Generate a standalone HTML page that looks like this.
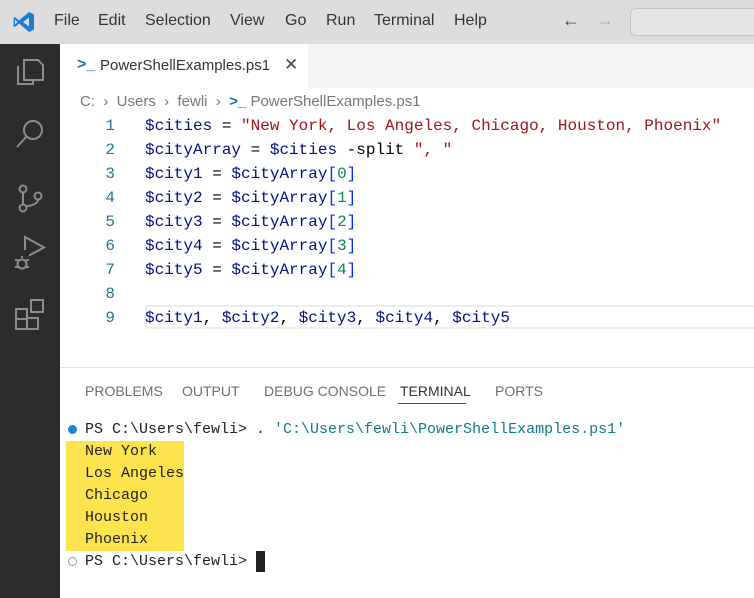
<!DOCTYPE html>
<html><head><meta charset="utf-8"><style>
*{margin:0;padding:0;box-sizing:border-box}
body{width:754px;height:598px;overflow:hidden;background:#fff;position:relative;font-family:"Liberation Sans",sans-serif}
.abs{position:absolute}
#title{left:0;top:0;width:754px;height:44px;background:#dddddd}
.menu{top:12px;font-size:16px;color:#333}
#act{left:0;top:44px;width:60px;height:554px;background:#2c2c2c}
#tabs{left:60px;top:44px;width:694px;height:44px;background:#f3f3f3}
#tab{left:60px;top:44px;width:248px;height:44px;background:#fff}
.mono{font-family:"Liberation Mono",monospace}
.code{font-size:16px;color:#001080;white-space:pre;left:145px;line-height:24px}
.ln{font-size:16px;color:#237893;left:95px;width:20px;text-align:right;line-height:24px}
.str{color:#a31515}.num{color:#098658}.op{color:#000}.br{color:#0431fa}
.ptab{top:383px;font-size:14px;color:#6f6f6f}
.term{font-size:15px;line-height:22px;white-space:pre;color:#222;left:85px}
</style></head><body>
<div id="title" class="abs"></div>
<svg class="abs" style="left:12px;top:10px" width="24" height="24" viewBox="0 0 24 24"><path d="M17 2 L22 4.5 V19.5 L17 22 L7 13.5 L3 17 L1.5 16 V8 L3 7 L7 10.5 Z M17 7.5 L11 12 L17 16.5 Z M3 9.5 V14.5 L5.5 12 Z" fill="#1a7fd4"/></svg>
<div class="abs menu" style="left:54px">File</div>
<div class="abs menu" style="left:98px">Edit</div>
<div class="abs menu" style="left:145px">Selection</div>
<div class="abs menu" style="left:230px">View</div>
<div class="abs menu" style="left:285px">Go</div>
<div class="abs menu" style="left:326px">Run</div>
<div class="abs menu" style="left:374px">Terminal</div>
<div class="abs menu" style="left:454px">Help</div>
<div class="abs" style="left:562px;top:10px;font-size:18px;color:#444">←</div>
<div class="abs" style="left:596px;top:10px;font-size:18px;color:#aaa">→</div>
<div class="abs" style="left:630px;top:8px;width:140px;height:28px;border:1px solid #c4c4c4;border-radius:6px;background:#e6e6e6"></div>
<div id="act" class="abs"></div>
<svg class="abs" style="left:0;top:44px" width="60" height="300" viewBox="0 0 60 300" fill="none" stroke="#8c8c8c" stroke-width="2">
<path d="M24 16 h14 l5 5 v15 h-19 z M18 22 v18 h15 v-4"/>
<circle cx="33" cy="86" r="9"/><path d="M26 93 l-9 10"/>
<circle cx="23" cy="145" r="3.5"/><circle cx="23" cy="164" r="3.5"/><circle cx="38" cy="152" r="3.5"/><path d="M23 148.5 v12 M38 155.5 q0 5 -12 7"/>
<path d="M25 206 l0 -13 l19 10.5 l-15 8"/><circle cx="22" cy="220" r="4.5"/><path d="M15 216 h3 M15 223 h3 M26 216 h3 M26 223 h3 M22 214 v-2"/>
<path d="M16 285 v-20 h11 v20 z M16 275 h11 M27 274 h11 v11 h-11 M31 256 h12 v12 h-12 z" />
</svg>
<div id="tabs" class="abs"></div>
<div id="tab" class="abs"></div>
<div class="abs" style="left:77px;top:56px;font-size:16px;color:#1a6fb8;font-weight:bold">&gt;_</div>
<div class="abs" style="left:100px;top:57px;font-size:15px;color:#333">PowerShellExamples.ps1</div>
<div class="abs" style="left:284px;top:55px;font-size:17px;color:#444">✕</div>
<div class="abs" style="left:80px;top:93px;font-size:15px;color:#777">C: &nbsp;›&nbsp; Users &nbsp;›&nbsp; fewli &nbsp;›&nbsp; <span style="color:#1a6fb8;font-weight:bold">&gt;_</span> PowerShellExamples.ps1</div>
<div class="abs" style="left:145px;top:305px;width:609px;height:24px;border:2px solid #eeeeee;border-right:none"></div>
<div class="abs mono ln" style="top:114px">1<br>2<br>3<br>4<br>5<br>6<br>7<br>8<br>9</div>
<div class="abs mono code" style="top:114px">$cities <span class="op">=</span> <span class="str">"New York, Los Angeles, Chicago, Houston, Phoenix"</span>
$cityArray <span class="op">=</span> $cities <span class="op">-split</span> <span class="str">", "</span>
$city1 <span class="op">=</span> $cityArray<span class="br">[</span><span class="num">0</span><span class="br">]</span>
$city2 <span class="op">=</span> $cityArray<span class="br">[</span><span class="num">1</span><span class="br">]</span>
$city3 <span class="op">=</span> $cityArray<span class="br">[</span><span class="num">2</span><span class="br">]</span>
$city4 <span class="op">=</span> $cityArray<span class="br">[</span><span class="num">3</span><span class="br">]</span>
$city5 <span class="op">=</span> $cityArray<span class="br">[</span><span class="num">4</span><span class="br">]</span>

$city1<span class="op">,</span> $city2<span class="op">,</span> $city3<span class="op">,</span> $city4<span class="op">,</span> $city5</div>
<div class="abs" style="left:60px;top:367px;width:694px;height:1px;background:#e0e0e0"></div>
<div class="abs ptab" style="left:85px">PROBLEMS</div>
<div class="abs ptab" style="left:182px">OUTPUT</div>
<div class="abs ptab" style="left:264px">DEBUG CONSOLE</div>
<div class="abs ptab" style="left:400px;color:#333">TERMINAL</div>
<div class="abs" style="left:398px;top:403px;width:68px;height:1px;background:#555"></div>
<div class="abs ptab" style="left:495px">PORTS</div>
<div class="abs" style="left:66px;top:441px;width:118px;height:110px;background:#fde34e"></div>
<div class="abs" style="left:68px;top:425px;width:9px;height:9px;border-radius:50%;background:#1a85d4"></div>
<div class="abs" style="left:68px;top:557px;width:9px;height:9px;border-radius:50%;border:1px solid #999"></div>
<div class="abs mono term" style="top:419px">PS C:\Users\fewli&gt; . <span style="color:#0f7b8a">'C:\Users\fewli\PowerShellExamples.ps1'</span>
New York
Los Angeles
Chicago
Houston
Phoenix
PS C:\Users\fewli&gt; </div>
<div class="abs" style="left:256px;top:551px;width:9px;height:21px;background:#222"></div>
</body></html>
